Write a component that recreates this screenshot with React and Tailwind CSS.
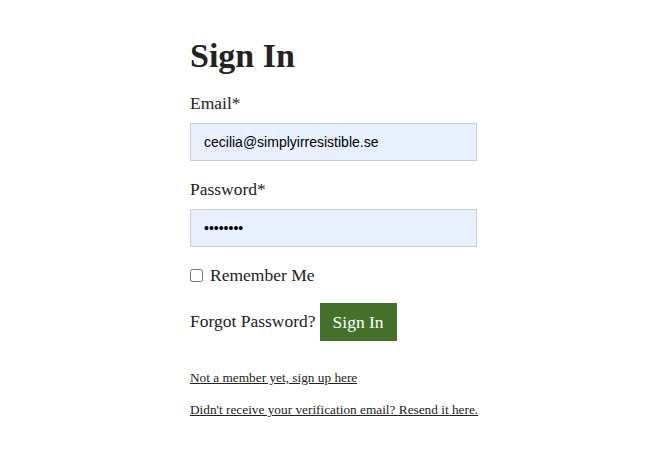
export default function App() {
  const serif = { fontFamily: '"Liberation Serif", "Times New Roman", serif' };
  return (
    <div className="min-h-[473px] w-full bg-white text-[#222]" style={serif}>
      <div className="w-[477px] pl-[190px] pt-[36px]">
        <h1 className="text-[34px] leading-[40px] font-bold text-[#222]">Sign In</h1>
        <form className="flex flex-col" onSubmit={(e) => e.preventDefault()}>
          <label className="mt-[15px] text-[17.5px] leading-[24px]">Email*</label>
          <input
            className="mt-[8px] h-[38px] w-full border border-[#c8cdd6] bg-[#e8f0fe] px-[13px] text-[14px] text-black outline-none"
            style={{ fontFamily: '"Liberation Sans", Arial, sans-serif' }}
            defaultValue="cecilia@simplyirresistible.se"
          />
          <label className="mt-[16px] text-[17.5px] leading-[24px]">Password*</label>
          <input
            type="password"
            className="mt-[8px] h-[38px] w-full border border-[#c8cdd6] bg-[#e8f0fe] px-[13px] text-[14px] text-black outline-none"
            style={{ fontFamily: '"Liberation Sans", Arial, sans-serif' }}
            defaultValue="password"
          />
          <label className="mt-[16px] flex h-[24px] items-center gap-[7px] text-[17.5px] leading-[24px]">
            <input type="checkbox" className="m-0 h-[13px] w-[13px]" />
            <span>Remember Me</span>
          </label>
          <div className="mt-[16px] flex items-center gap-[4px]">
            <span className="text-[17.5px] leading-[24px] -translate-y-[1px]">Forgot Password?</span>
            <button className="h-[38px] w-[77px] bg-[#45722a] text-[17.5px] text-white">Sign In</button>
          </div>
          <a href="#" className="mt-[29px] whitespace-nowrap text-[13.3px] leading-[16px] text-[#222] underline">Not a member yet, sign up here</a>
          <a href="#" className="mt-[16px] whitespace-nowrap text-[13.3px] leading-[16px] text-[#222] underline">Didn't receive your verification email? Resend it here.</a>
        </form>
      </div>
    </div>
  );
}
